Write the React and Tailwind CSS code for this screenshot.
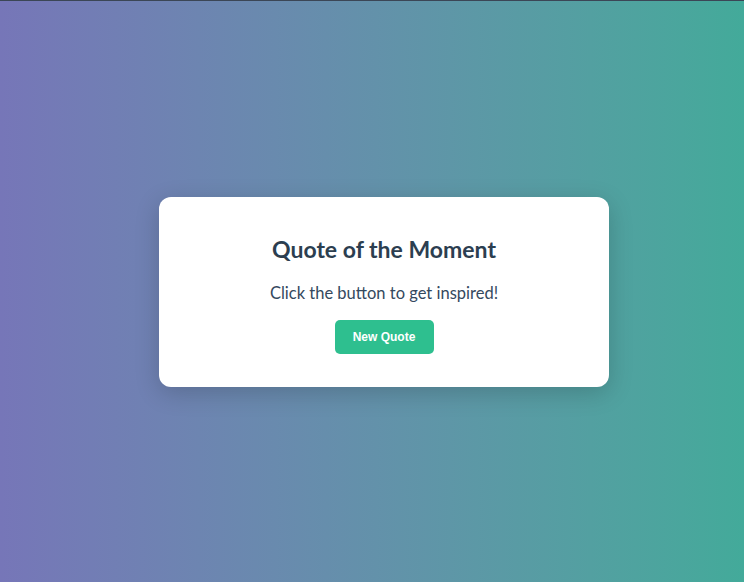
import React from "react";

const App = () => {
  return (
    <div
      className="min-h-screen w-full flex items-center justify-center pl-6 border-t border-[#3b4656] bg-gradient-to-r from-[#7676b8] to-[#43aa9a]"
      style={{ fontFamily: "Lato, 'Open Sans', sans-serif" }}
    >
      <div className="w-[450px] bg-white rounded-xl px-8 pt-[38px] pb-[33px] text-center shadow-[0_6px_24px_rgba(0,0,0,0.18)]">
        <h1 className="text-[23px] font-bold text-[#2c3e50] leading-7">Quote of the Moment</h1>
        <p className="mt-[18px] text-[16.5px] text-[#34495e] leading-6">Click the button to get inspired!</p>
        <button
          type="button"
          className="mt-[15px] w-[99px] h-[34px] rounded-[5px] bg-[#2ebf8f] text-white text-[12px] font-bold"
          style={{ fontFamily: "'Liberation Sans', Arial, sans-serif" }}
        >
          New Quote
        </button>
      </div>
    </div>
  );
};

export default App;
